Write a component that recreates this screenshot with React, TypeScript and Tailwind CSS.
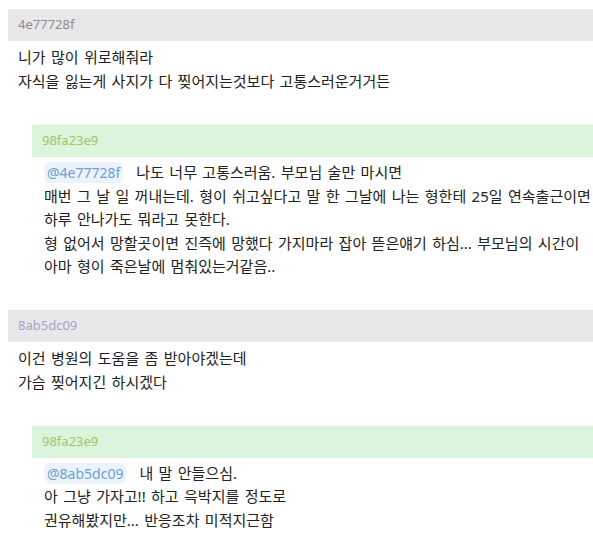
const threads = [
  {
    id: '4e77728f',
    idColor: 'text-[#8c8c8c]',
    lines: ['니가 많이 위로해줘라', '자식을 잃는게 사지가 다 찢어지는것보다 고통스러운거거든'],
    reply: {
      id: '98fa23e9',
      mention: '@4e77728f',
      lines: [
        '나도 너무 고통스러움. 부모님 술만 마시면',
        '매번 그 날 일 꺼내는데. 형이 쉬고싶다고 말 한 그날에 나는 형한테 25일 연속출근이면',
        '하루 안나가도 뭐라고 못한다.',
        '형 없어서 망할곳이면 진즉에 망했다 가지마라 잡아 뜯은얘기 하심... 부모님의 시간이',
        '아마 형이 죽은날에 멈춰있는거같음..',
      ],
    },
  },
  {
    id: '8ab5dc09',
    idColor: 'text-[#a3a5c0]',
    lines: ['이건 병원의 도움을 좀 받아야겠는데', '가슴 찢어지긴 하시겠다'],
    reply: {
      id: '98fa23e9',
      mention: '@8ab5dc09',
      lines: ['내 말 안들으심.', '아 그냥 가자고!! 하고 윽박지를 정도로', '권유해봤지만... 반응조차 미적지근함'],
    },
  },
]

export default function App() {
  return (
    <div
      className="min-h-screen bg-white pl-2 pt-[9px] text-[#222222]"
      style={{ fontFamily: '"Noto Sans", "Noto Sans CJK KR", sans-serif' }}
    >
      {threads.map((t) => (
        <div key={t.id} className="mb-[31px]">
          {/* Comment header */}
          <div className={`flex h-8 items-center bg-[#e8e8ea] pl-[10px] text-[13px] ${t.idColor}`}>{t.id}</div>
          <div className="px-[10px] pt-1 text-[15px] leading-6 [word-spacing:1.5px]">
            {t.lines.map((l) => (
              <div key={l}>{l}</div>
            ))}
          </div>

          {/* Reply */}
          <div className="ml-6 mt-8">
            <div className="flex h-8 items-center bg-[#dcf3dc] pl-[10px] text-[13px] text-[#9cc76a]">{t.reply.id}</div>
            <div className="whitespace-nowrap px-3 pt-1 text-[15px] leading-[23.5px] [word-spacing:1.5px]">
              {t.reply.lines.map((l, i) => (
                <div key={l}>
                  {i === 0 && (
                    <span className="mr-[13px] rounded-md bg-[#ecf3fb] px-[3px] py-[1px] text-[14px] text-[#6d9fd6] [word-spacing:0]">
                      {t.reply.mention}
                    </span>
                  )}
                  {l}
                </div>
              ))}
            </div>
          </div>
        </div>
      ))}
    </div>
  )
}
